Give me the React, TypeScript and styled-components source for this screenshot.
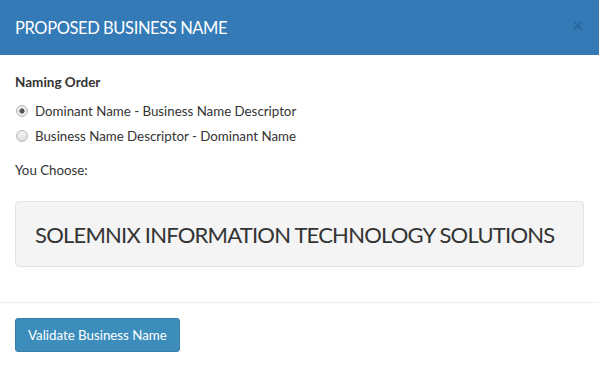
import React from "react";
import styled, { createGlobalStyle } from "styled-components";

const Global = createGlobalStyle`
  html, body { margin: 0; padding: 0; background: #fff; }
  body { font-family: "Lato", "Open Sans", sans-serif; color: #333; }
  * { box-sizing: border-box; }
`;

const Modal = styled.div`
  width: 599px;
  height: 367px;
  background: #fff;
  display: flex;
  flex-direction: column;
`;

const Header = styled.div`
  height: 55px;
  background: #337ab7;
  color: #fff;
  display: flex;
  align-items: center;
  justify-content: space-between;
  padding: 0 15px;
`;

const Title = styled.h4`
  margin: 0;
  font-size: 16.5px;
  font-weight: 400;
  letter-spacing: -0.4px;
`;

const Close = styled.span`
  color: #1f5a8c;
  opacity: 0.6;
  font-size: 18px;
  font-weight: 700;
  line-height: 1;
  margin-right: 1px;
  margin-top: -6px;
`;

const Body = styled.div`
  padding: 19px 15px 35px;
  border-bottom: 1px solid #eee;
  display: flex;
  flex-direction: column;
`;

const Label = styled.div`
  font-size: 13.5px;
  font-weight: 700;
  margin-bottom: 8px;
`;

const RadioRow = styled.label`
  display: flex;
  align-items: center;
  height: 25px;
  font-size: 13.3px;
`;

const RadioDot = styled.span<{ $checked?: boolean }>`
  width: 12px;
  height: 12px;
  border-radius: 50%;
  border: 1px solid #b8b8b8;
  background: ${(p) =>
    p.$checked
      ? "radial-gradient(circle, #555 0 2.3px, #eaeaea 2.8px)"
      : "linear-gradient(#f4f4f4, #dcdcdc)"};
  margin: 0 7px 0 1px;
  flex: none;
`;

const Choose = styled.div`
  font-size: 13.3px;
  margin-top: 14px;
  margin-bottom: 23px;
`;

const NameBox = styled.div`
  height: 66px;
  background: #f4f4f4;
  border: 1px solid #e3e3e3;
  border-radius: 4px;
  display: flex;
  align-items: center;
  padding: 0 19px;
  font-size: 22px;
  letter-spacing: -0.78px;
  white-space: nowrap;
  color: #333;
`;

const Footer = styled.div`
  padding: 15px 15px;
`;

const Button = styled.button`
  height: 34px;
  padding: 0 12px;
  background: #3c8dbc;
  border: 1px solid #367fa9;
  border-radius: 3px;
  color: #fff;
  font-family: inherit;
  font-size: 13.3px;
`;

export default function App() {
  return (
    <Modal>
      <Global />
      <Header>
        <Title>PROPOSED BUSINESS NAME</Title>
        <Close>×</Close>
      </Header>
      <Body>
        <Label>Naming Order</Label>
        <RadioRow>
          <RadioDot $checked />
          Dominant Name - Business Name Descriptor
        </RadioRow>
        <RadioRow>
          <RadioDot />
          Business Name Descriptor - Dominant Name
        </RadioRow>
        <Choose>You Choose:</Choose>
        <NameBox>SOLEMNIX INFORMATION TECHNOLOGY SOLUTIONS</NameBox>
      </Body>
      <Footer>
        <Button>Validate Business Name</Button>
      </Footer>
    </Modal>
  );
}
